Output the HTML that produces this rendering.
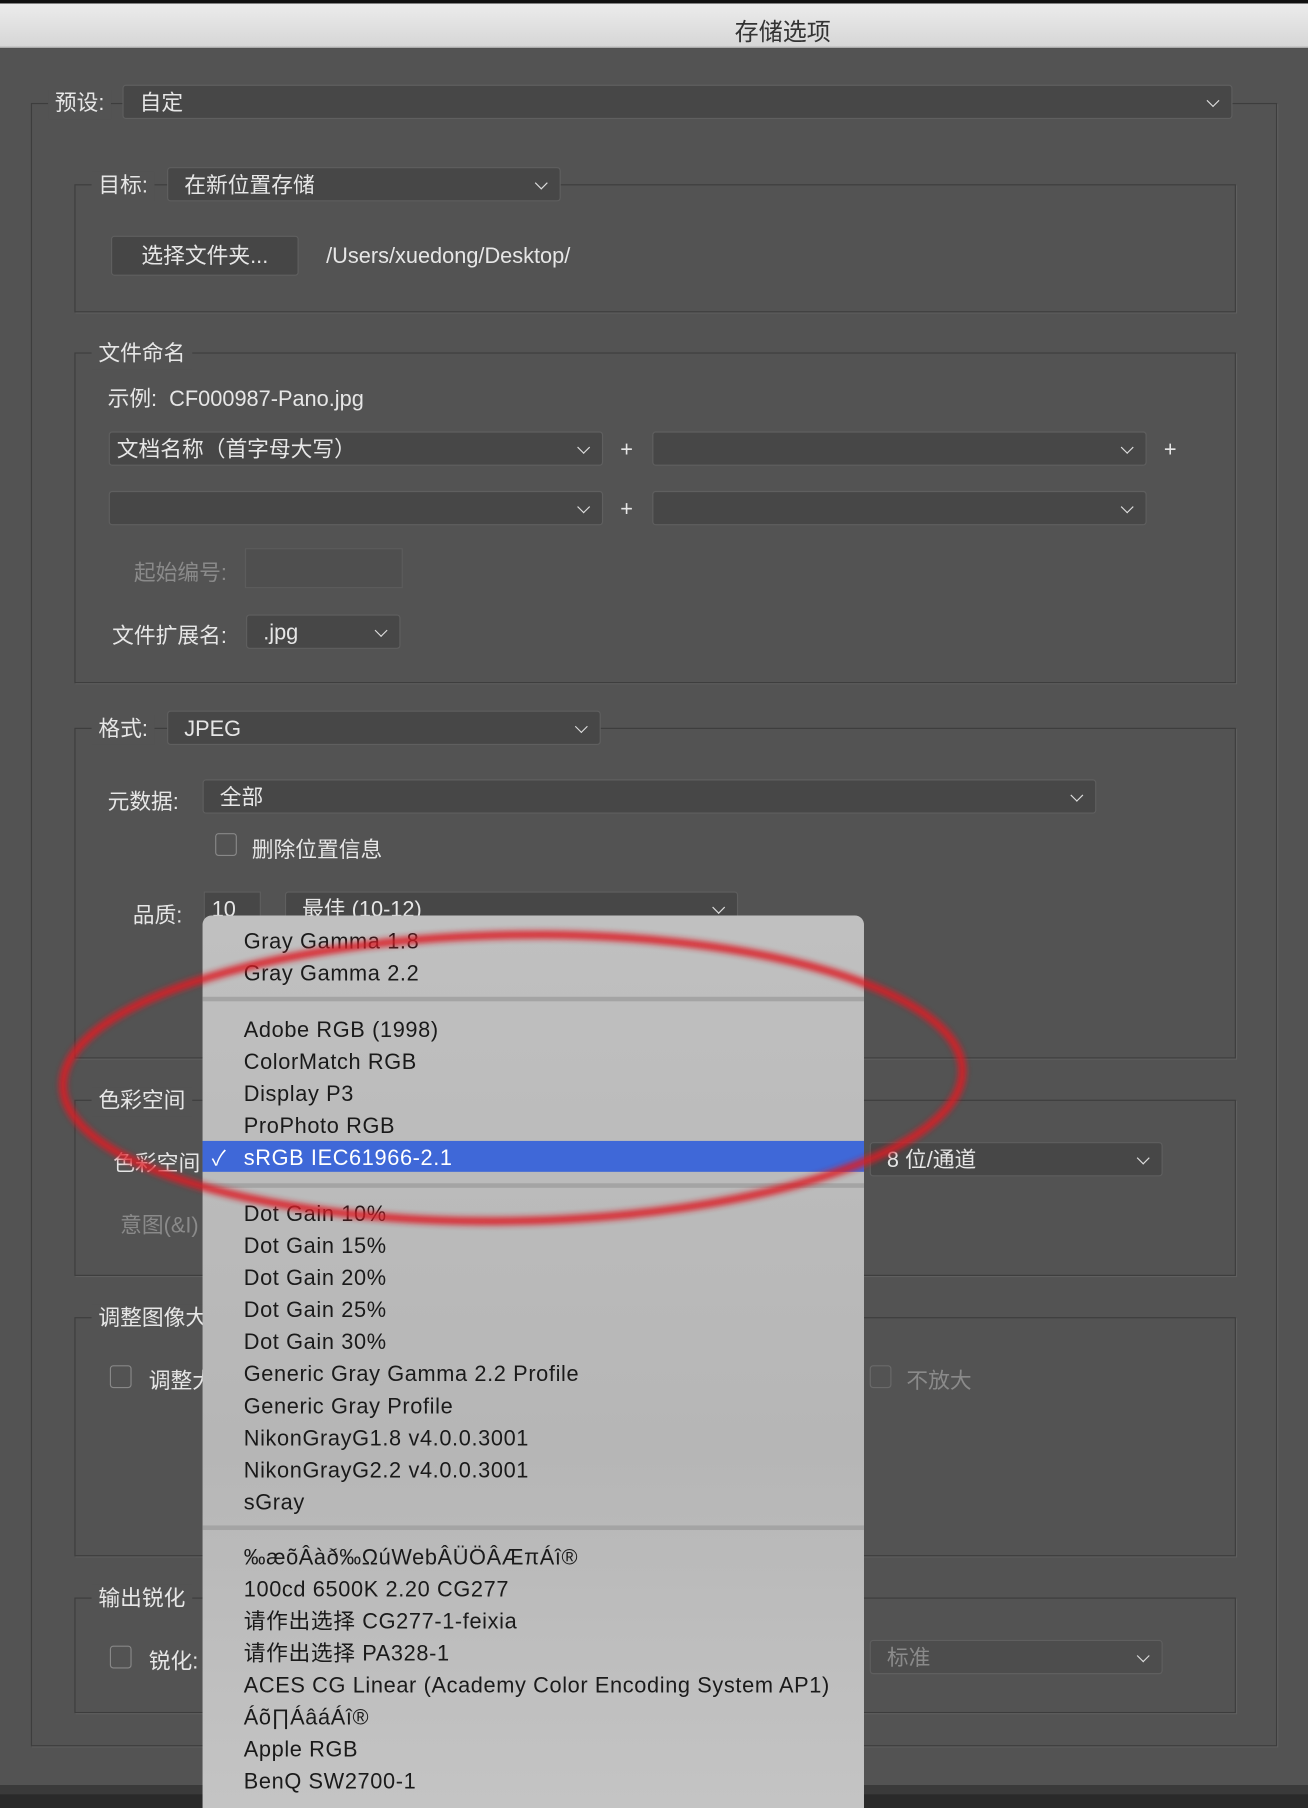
<!DOCTYPE html>
<html><head><meta charset="utf-8"><style>
*{margin:0;padding:0;box-sizing:border-box}
html,body{width:1308px;height:1794px;overflow:hidden;background:#2a2a2a}
#s{position:absolute;left:0;top:0;width:1143px;height:1568px;transform:scale(1.14436);transform-origin:0 0;font-family:"Liberation Sans","Noto Sans CJK SC",sans-serif;color:#e6e6e6;font-size:19px}
.a{position:absolute;white-space:nowrap;margin-top:2px}
.nm{margin-top:0}
.bar{position:absolute;left:0;top:0;width:1143px;height:42px;background:linear-gradient(#ececec,#d6d6d6);border-top:3px solid #111;border-bottom:1px solid #aaa}
.body{position:absolute;left:0;top:42px;width:1143px;height:1518px;background:#535353}
.box{position:absolute;border:1.5px solid #3d3d3d;box-shadow:1px 1px 0 #5f5f5f}
.lg{position:absolute;background:#535353;padding:0 6px;line-height:26px;margin-top:2px}
.dd{position:absolute;background:#474747;border:1px solid #5f5f5f;border-radius:3px;height:30px;line-height:32px;padding-left:14px}
.dd::after{content:"";position:absolute;right:12px;top:9px;width:7px;height:7px;border-right:1.5px solid #ddd;border-bottom:1.5px solid #ddd;transform:rotate(45deg)}
.cb{position:absolute;width:19px;height:20px;border:1.5px solid #888;border-radius:3px}
.g{color:#8a8a8a}
.menu{position:absolute;left:177px;top:800px;width:578px;height:780px;background:linear-gradient(#c0c0c0,#b6b6b6 60%,#c4c4c4);border-radius:8px 8px 0 0;color:#1a1a1a}
.mi{position:absolute;left:36px;font-size:19px;line-height:26px;letter-spacing:.55px;margin-top:3px}
.sep{position:absolute;left:0;width:578px;height:4px;background:#a4a4a4}
</style></head><body><div id="s">
<div class="bar"></div>
<div class="a" style="left:0;width:1368px;top:10px;text-align:center;color:#333;font-size:21px">存储选项</div>
<div class="body"></div>
<div class="a nm" style="left:0;top:1560px;width:1143px;height:8px;background:#3a3a3a"></div>

<div class="box" style="left:27px;top:90px;width:1089px;height:1436px"></div>
<div class="lg" style="left:42px;top:76px">预设:</div>
<div class="dd" style="left:107px;top:74px;width:970px">自定</div>

<div class="box" style="left:65px;top:161px;width:1015px;height:112px"></div>
<div class="lg" style="left:80px;top:148px">目标:</div>
<div class="dd" style="left:146px;top:146px;width:344px">在新位置存储</div>
<div class="a nm" style="left:97px;top:206px;width:164px;height:35px;background:#464646;border:1px solid #5f5f5f;border-radius:3px;text-align:center;line-height:36px">选择文件夹...</div>
<div class="a" style="left:285px;top:212px">/Users/xuedong/Desktop/</div>

<div class="box" style="left:65px;top:308px;width:1015px;height:289px"></div>
<div class="lg" style="left:80px;top:295px">文件命名</div>
<div class="a" style="left:94px;top:332px">示例:&nbsp;&nbsp;CF000987-Pano.jpg</div>
<div class="dd" style="left:95px;top:377px;width:432px;padding-left:6px">文档名称（首字母大写）</div>
<div class="a" style="left:542px;top:381px">+</div>
<div class="dd" style="left:570px;top:377px;width:432px"></div>
<div class="a" style="left:1017px;top:381px">+</div>
<div class="dd" style="left:95px;top:429px;width:432px"></div>
<div class="a" style="left:542px;top:433px">+</div>
<div class="dd" style="left:570px;top:429px;width:432px"></div>
<div class="a g" style="left:117px;top:484px">起始编号:</div>
<div class="a nm" style="left:214px;top:479px;width:138px;height:35px;border:1px solid #5c5c5c;background:#4f4f4f"></div>
<div class="a" style="left:98px;top:539px">文件扩展名:</div>
<div class="dd" style="left:215px;top:537px;width:135px">.jpg</div>

<div class="box" style="left:65px;top:636px;width:1015px;height:289px"></div>
<div class="lg" style="left:80px;top:623px">格式:</div>
<div class="dd" style="left:146px;top:621px;width:379px">JPEG</div>
<div class="a" style="left:94px;top:684px">元数据:</div>
<div class="dd" style="left:177px;top:681px;width:781px">全部</div>
<div class="cb" style="left:188px;top:728px"></div>
<div class="a" style="left:220px;top:726px">删除位置信息</div>
<div class="a" style="left:116px;top:783px">品质:</div>
<div class="a nm" style="left:178px;top:779px;width:50px;height:30px;border:1px solid #5f5f5f;background:#474747;padding-left:6px;line-height:32px">10</div>
<div class="dd" style="left:249px;top:779px;width:396px">最佳 (10-12)</div>

<div class="box" style="left:65px;top:961px;width:1015px;height:154px"></div>
<div class="lg" style="left:80px;top:948px">色彩空间</div>
<div class="a" style="left:99px;top:1000px">色彩空间</div>
<div class="dd" style="left:760px;top:998px;width:256px">8 位/通道</div>
<div class="a g" style="left:105px;top:1054px">意图(&amp;I)</div>

<div class="box" style="left:65px;top:1151px;width:1015px;height:209px"></div>
<div class="lg" style="left:80px;top:1138px">调整图像大小</div>
<div class="cb" style="left:96px;top:1193px"></div>
<div class="a" style="left:130px;top:1190px">调整大小</div>
<div class="cb" style="left:760px;top:1193px;border-color:#6a6a6a"></div>
<div class="a g" style="left:792px;top:1190px">不放大</div>

<div class="box" style="left:65px;top:1396px;width:1015px;height:101px"></div>
<div class="lg" style="left:80px;top:1383px">输出锐化</div>
<div class="cb" style="left:96px;top:1438px"></div>
<div class="a" style="left:130px;top:1435px">锐化:</div>
<div class="dd g" style="left:760px;top:1433px;width:256px;background:#4d4d4d">标准</div>

<div class="menu">
<div class="mi" style="top:8px">Gray Gamma 1.8</div>
<div class="mi" style="top:36px">Gray Gamma 2.2</div>
<div class="sep" style="top:71px"></div>
<div class="mi" style="top:85px">Adobe RGB (1998)</div>
<div class="mi" style="top:113px">ColorMatch RGB</div>
<div class="mi" style="top:141px">Display P3</div>
<div class="mi" style="top:169px">ProPhoto RGB</div>
<div class="a nm" style="left:0;top:197px;width:578px;height:27px;background:#3f68d8"></div>
<div class="mi" style="top:197px;color:#fff">sRGB IEC61966-2.1</div>
<div class="a" style="left:8px;top:197px;color:#fff;line-height:26px;font-size:18px">✓</div>
<div class="sep" style="top:234px"></div>
<div class="mi" style="top:246px">Dot Gain 10%</div>
<div class="mi" style="top:274px">Dot Gain 15%</div>
<div class="mi" style="top:302px">Dot Gain 20%</div>
<div class="mi" style="top:330px">Dot Gain 25%</div>
<div class="mi" style="top:358px">Dot Gain 30%</div>
<div class="mi" style="top:386px">Generic Gray Gamma 2.2 Profile</div>
<div class="mi" style="top:414px">Generic Gray Profile</div>
<div class="mi" style="top:442px">NikonGrayG1.8 v4.0.0.3001</div>
<div class="mi" style="top:470px">NikonGrayG2.2 v4.0.0.3001</div>
<div class="mi" style="top:498px">sGray</div>
<div class="sep" style="top:533px"></div>
<div class="mi" style="top:546px">‰æõÂàð‰ΩúWebÂÜÖÂÆπÁî®</div>
<div class="mi" style="top:574px">100cd 6500K 2.20 CG277</div>
<div class="mi" style="top:602px">请作出选择 CG277-1-feixia</div>
<div class="mi" style="top:630px">请作出选择 PA328-1</div>
<div class="mi" style="top:658px">ACES CG Linear (Academy Color Encoding System AP1)</div>
<div class="mi" style="top:686px">Áõ∏ÁâáÁî®</div>
<div class="mi" style="top:714px">Apple RGB</div>
<div class="mi" style="top:742px">BenQ SW2700-1</div>
</div>

<svg class="a nm" style="left:0;top:0" width="1143" height="1568">
<defs><filter id="b"><feGaussianBlur stdDeviation="2.5"/></filter></defs>
<ellipse cx="448" cy="942" rx="393" ry="125" transform="rotate(-1 448 942)" fill="none" stroke="#dc1f26" stroke-width="7" filter="url(#b)" opacity=".9"/>
</svg>
</div></body></html>
